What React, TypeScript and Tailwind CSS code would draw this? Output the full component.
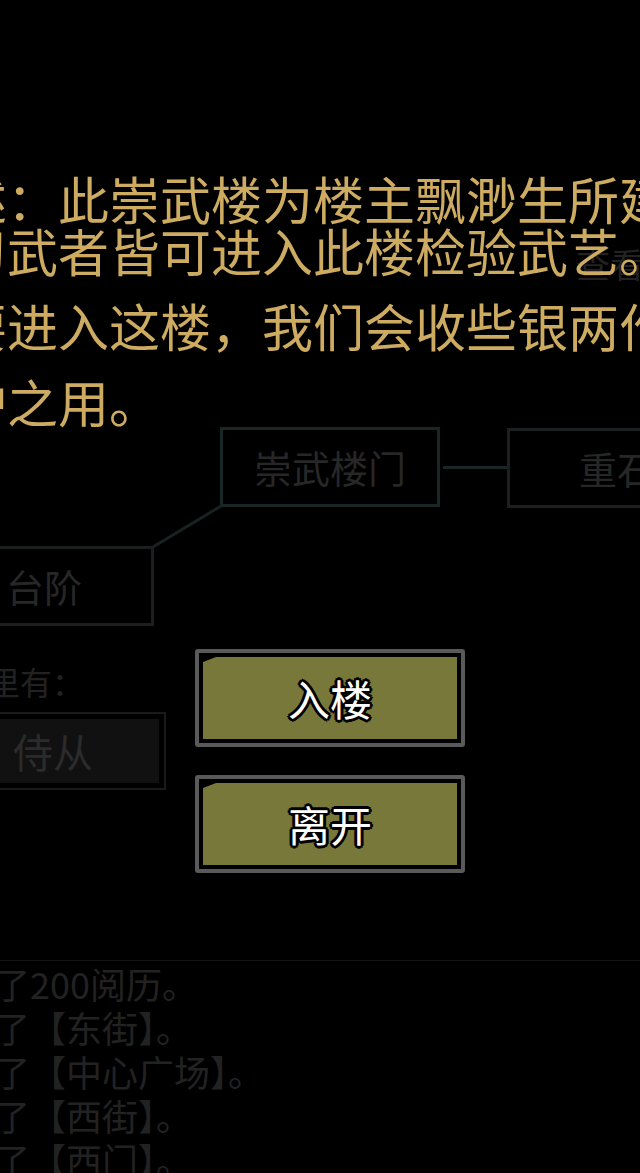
import React from "react";

const cjk = "font-['Noto_Sans_CJK_SC','Noto_Sans',sans-serif]";

const intro = [
  "述：此崇武楼为楼主飘渺生所建",
  "习武者皆可进入此楼检验武艺。",
  "要进入这楼，我们会收些银两作",
  "护之用。",
];

const log = ["获得了200阅历。", "来到了【东街】。", "来到了【中心广场】。", "来到了【西街】。", "来到了【西门】。"];

function MapNode({ label, className }: { label: string; className: string }) {
  return (
    <div className={`absolute flex h-[80px] w-[220px] items-center justify-center border-[3px] text-[38px] leading-none text-[#272727] ${className}`}>
      {label}
    </div>
  );
}

function ChoiceButton({ label }: { label: string }) {
  return (
    <button className="ml-[195px] h-[98px] w-[270px] rounded-[3px] border-[4px] border-[#5a5a5a] bg-black p-[4px]">
      <div className="flex h-full w-full items-center justify-center bg-[#78783a] [clip-path:polygon(13px_0,100%_0,100%_100%,0_100%,0_5px)]">
        <span className="text-[42px] leading-none text-white [text-shadow:-3px_0_0_#000,3px_0_0_#000,0_-3px_0_#000,0_3px_0_#000,-2px_-2px_0_#000,2px_-2px_0_#000,-2px_2px_0_#000,2px_2px_0_#000]">
          {label}
        </span>
      </div>
    </button>
  );
}

export default function App() {
  return (
    <div className={`relative h-[1173px] w-[640px] overflow-hidden bg-black ${cjk}`}>
      {/* scene behind the dialog, dimmed */}
      <div className="flex flex-col">
        <div className="h-[244px]" />
        <div className="h-[40px] whitespace-nowrap pl-[576px] text-[34px] leading-[40px] text-[#222222]">查看</div>
        <div className="h-[143px]" />

        {/* map */}
        <div className="relative h-[196px]">
          <MapNode label="崇武楼门" className="left-[220px] top-0 border-[#182626]" />
          <div className="absolute left-[443px] top-[39px] h-[3px] w-[64px] bg-[#182626]" />
          <MapNode label="重石" className="left-[507px] top-[1px] border-[#1c2020]" />
          <svg className="absolute left-[150px] top-[76px]" width="74" height="46">
            <line x1="71" y1="3" x2="3" y2="44" stroke="#182222" strokeWidth="3" />
          </svg>
          <MapNode label="台阶" className="left-[-66px] top-[119px] h-[78px] w-[219px] border-[#1b1f1f]" />
        </div>

        <div className="h-[40px]" />
        <div className="ml-[-44px] whitespace-nowrap text-[32px] leading-[36px] text-[#222222]">这里有：</div>
        <div className="ml-[-60px] mt-[13px] h-[78px] w-[226px] border-2 border-[#1a1a1a] p-[5px]">
          <div className="flex h-full w-full items-center justify-center bg-[#111111] text-[40px] leading-none text-[#2b2b2b]">
            侍从
          </div>
        </div>

        <div className="h-[170px]" />
        <div className="border-t border-[#141414]" />
        <div className="flex flex-col">
          {log.map((line) => (
            <div key={line} className="ml-[-78px] whitespace-nowrap text-[36px] leading-[44px] text-[#222222]">
              {line}
            </div>
          ))}
        </div>
      </div>

      {/* dialog */}
      <div className="absolute inset-0 flex flex-col pt-[172px]">
        <div className="ml-[-44px] whitespace-nowrap text-[51px] text-[#cdab60]">
          <div className="leading-[52px]">{intro[0]}</div>
          <div className="leading-[52px]">{intro[1]}</div>
          <div className="mt-[11px] leading-[76px]">{intro[2]}</div>
          <div className="leading-[76px]">{intro[3]}</div>
        </div>
        <div className="mt-[210px] flex flex-col gap-[28px]">
          <ChoiceButton label="入楼" />
          <ChoiceButton label="离开" />
        </div>
      </div>
    </div>
  );
}
